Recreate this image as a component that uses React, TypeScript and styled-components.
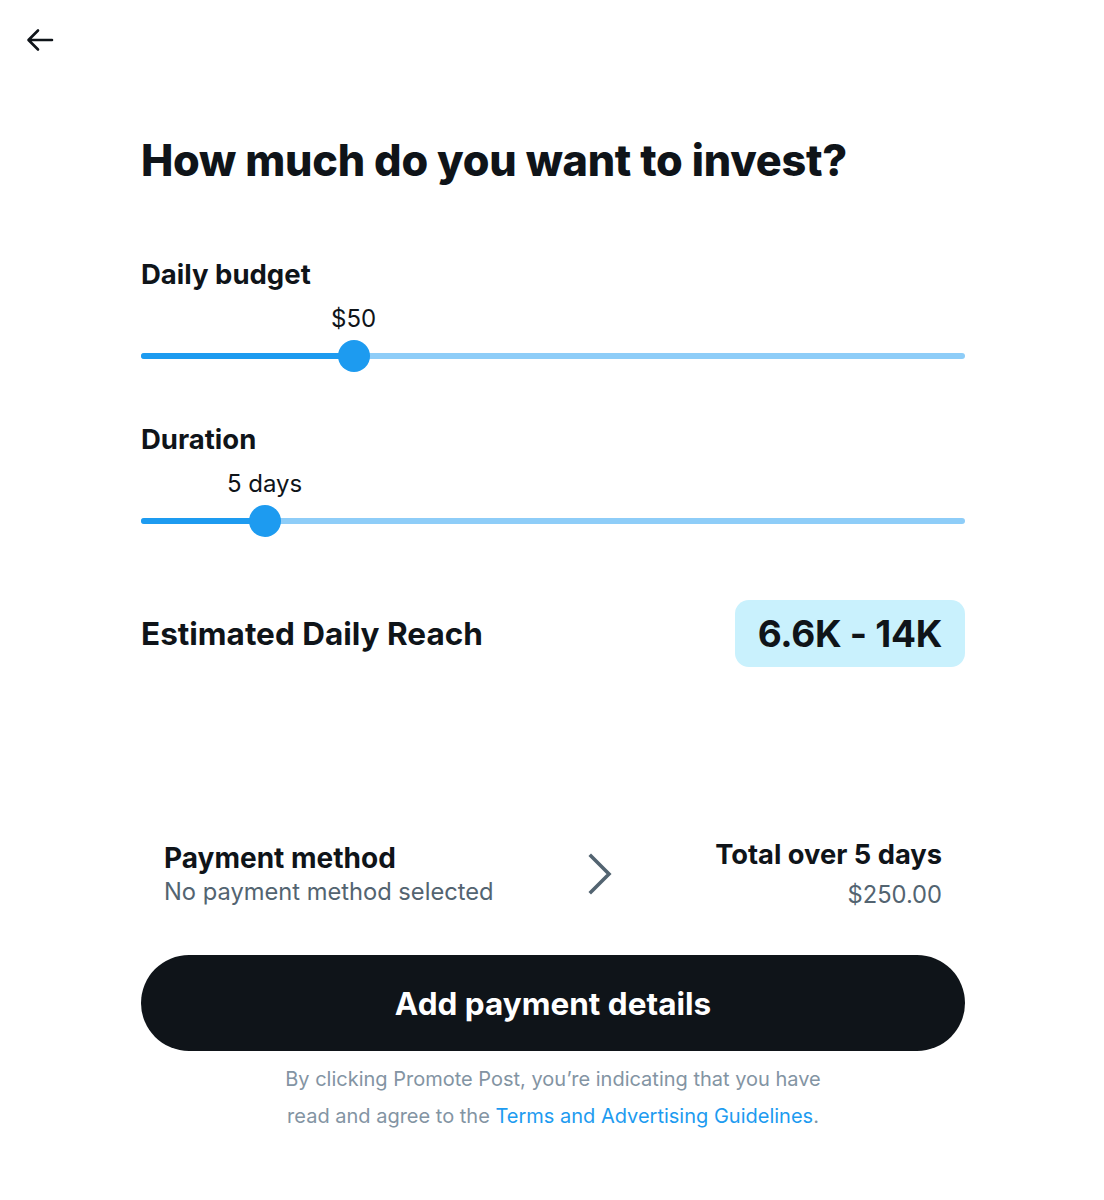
import styled, { createGlobalStyle } from 'styled-components';

const GlobalStyle = createGlobalStyle`
  html, body {
    margin: 0;
    padding: 0;
    background: #ffffff;
  }
  body {
    font-family: Inter, "Noto Sans", "Liberation Sans", sans-serif;
    color: #0f1419;
  }
`;

type SliderProps = {
  label: string;
  valueLabel: string;
  percent: number;
};

const Slider = ({ label, valueLabel, percent }: SliderProps) => (
  <SliderBlock>
    <SectionLabel>{label}</SectionLabel>
    <TrackArea>
      <ValueLabel style={{ left: `${percent}%` }}>{valueLabel}</ValueLabel>
      <Track>
        <TrackFill style={{ width: `${percent}%` }} />
        <Thumb style={{ left: `${percent}%` }} />
      </Track>
    </TrackArea>
  </SliderBlock>
);

const App = () => {
  return (
    <>
      <GlobalStyle />
      <Page>
        <BackButton aria-label="Back">
          <svg width="28" height="24" viewBox="0 0 28 24" fill="none">
            <path
              d="M26 12H3M12 2.5L2.5 12L12 21.5"
              stroke="#0f1419"
              strokeWidth="2.6"
              strokeLinecap="round"
              strokeLinejoin="round"
            />
          </svg>
        </BackButton>

        <Content>
          <Title>{'How much do you want to invest?'}</Title>

          <Slider label="Daily budget" valueLabel="$50" percent={25.8} />
          <Slider label="Duration" valueLabel="5 days" percent={15} />

          <ReachRow>
            <ReachLabel>{'Estimated Daily Reach'}</ReachLabel>
            <ReachBadge>{'6.6K - 14K'}</ReachBadge>
          </ReachRow>

          <SummaryRow>
            <PaymentMethod>
              <div>
                <SummaryTitle>{'Payment method'}</SummaryTitle>
                <SummaryText>{'No payment method selected'}</SummaryText>
              </div>
              <svg width="26" height="42" viewBox="0 0 26 42" fill="none">
                <path
                  d="M4 3L22 21L4 39"
                  stroke="#536471"
                  strokeWidth="3.6"
                  strokeLinecap="square"
                />
              </svg>
            </PaymentMethod>
            <Total>
              <SummaryTitle $compact>{'Total over 5 days'}</SummaryTitle>
              <SummaryText>{'$250.00'}</SummaryText>
            </Total>
          </SummaryRow>

          <PrimaryButton type="button">{'Add payment details'}</PrimaryButton>

          <Disclaimer>
            {'By clicking Promote Post, you’re indicating that you have'}
            <br />
            {'read and agree to the '}
            <Link href="#">{'Terms and Advertising Guidelines'}</Link>
            {'.'}
          </Disclaimer>
        </Content>
      </Page>
    </>
  );
};

const Page = styled.div`
  width: 1104px;
  height: 1200px;
  position: relative;
  background: #ffffff;
`;

const BackButton = styled.button`
  position: absolute;
  top: 28px;
  left: 26px;
  border: none;
  background: transparent;
  padding: 0;
  display: flex;
  cursor: pointer;
`;

const Content = styled.div`
  width: 824px;
  margin: 0 auto 0 141px;
  padding-top: 134px;
  display: flex;
  flex-direction: column;
`;

const Title = styled.h1`
  margin: 0;
  font-size: 43.2px;
  line-height: 52px;
  font-weight: 800;
  letter-spacing: -0.25px;
`;

const SliderBlock = styled.div`
  display: flex;
  flex-direction: column;
  margin-top: 71px;

  & + & {
    margin-top: 63px;
  }
`;

const SectionLabel = styled.div`
  font-size: 27.5px;
  line-height: 34px;
  font-weight: 700;
`;

const TrackArea = styled.div`
  position: relative;
  padding-top: 62px;
`;

const ValueLabel = styled.div`
  position: absolute;
  top: 13px;
  transform: translateX(-50%);
  font-size: 24px;
  line-height: 30px;
  white-space: nowrap;
`;

const Track = styled.div`
  position: relative;
  height: 6px;
  border-radius: 3px;
  background: #8ecdf8;
`;

const TrackFill = styled.div`
  height: 100%;
  border-radius: 3px;
  background: #1d9bf0;
`;

const Thumb = styled.div`
  position: absolute;
  top: 50%;
  width: 32px;
  height: 32px;
  border-radius: 50%;
  background: #1d9bf0;
  transform: translate(-50%, -50%);
`;

const ReachRow = styled.div`
  margin-top: 76px;
  display: flex;
  align-items: center;
  justify-content: space-between;
`;

const ReachLabel = styled.div`
  font-size: 31.5px;
  font-weight: 700;
`;

const ReachBadge = styled.div`
  height: 67px;
  padding: 0 23px;
  display: flex;
  align-items: center;
  border-radius: 14px;
  background: #c9f1fd;
  font-size: 37px;
  font-weight: 700;
  letter-spacing: -0.3px;
`;

const SummaryRow = styled.div`
  margin-top: 170px;
  padding: 0 23px;
  display: flex;
  align-items: center;
  justify-content: space-between;
`;

const PaymentMethod = styled.div`
  display: flex;
  align-items: center;
  gap: 93px;
`;

const Total = styled.div`
  display: flex;
  flex-direction: column;
  align-items: flex-end;
  gap: 6px;
`;

const SummaryTitle = styled.div<{ $compact?: boolean }>`
  font-size: ${({ $compact }) => ($compact ? '27.3px' : '28px')};
  line-height: 36px;
  font-weight: 700;
`;

const SummaryText = styled.div`
  font-size: 23.7px;
  line-height: 32px;
  color: #536471;
`;

const PrimaryButton = styled.button`
  margin-top: 44px;
  height: 96px;
  width: 100%;
  border: none;
  border-radius: 48px;
  background: #0f1419;
  color: #ffffff;
  font-family: inherit;
  font-size: 31.5px;
  font-weight: 700;
  cursor: pointer;
`;

const Disclaimer = styled.p`
  margin: 10px 0 0;
  text-align: center;
  font-size: 20px;
  line-height: 37px;
  color: #8394a3;
`;

const Link = styled.a`
  color: #1d9bf0;
  text-decoration: none;
`;

export default App;
